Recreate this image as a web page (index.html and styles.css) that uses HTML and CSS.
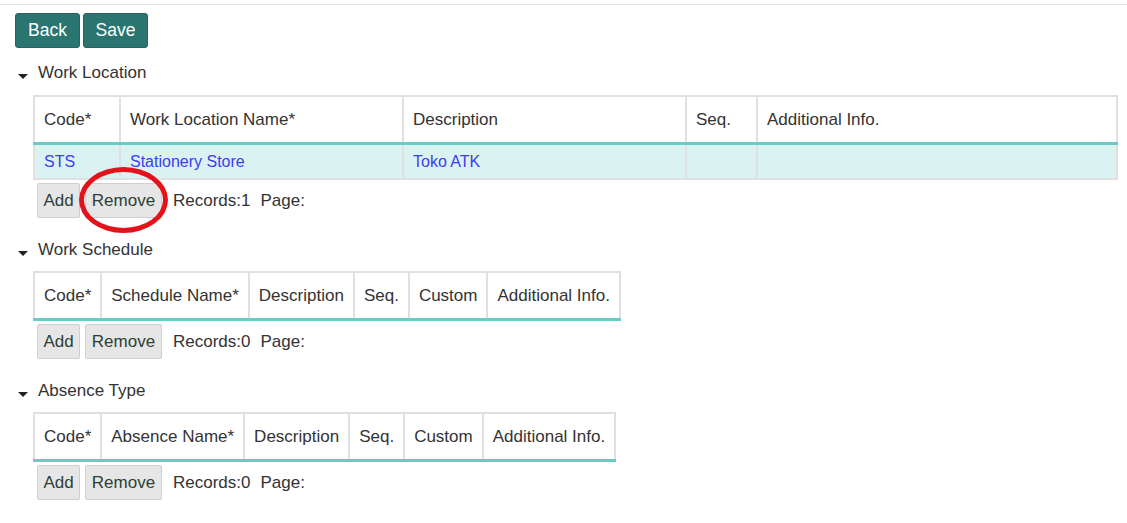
FILE: index.html
```html
<!DOCTYPE html>
<html>
<head>
<meta charset="utf-8">
<link rel="stylesheet" href="styles.css">
</head>
<body>
<div class="page">
  <div class="toolbar">
    <button class="btn-primary">Back</button>
    <button class="btn-primary">Save</button>
  </div>

  <section class="section">
    <div class="section-head"><span class="caret"></span><span>Work Location</span></div>
    <table class="grid grid-full">
      <thead>
        <tr>
          <th class="w-code">Code*</th>
          <th class="w-name">Work Location Name*</th>
          <th class="w-desc">Description</th>
          <th class="w-seq">Seq.</th>
          <th>Additional Info.</th>
        </tr>
      </thead>
      <tbody>
        <tr class="selected">
          <td><a>STS</a></td>
          <td><a>Stationery Store</a></td>
          <td><a>Toko ATK</a></td>
          <td></td>
          <td></td>
        </tr>
      </tbody>
    </table>
    <div class="actions">
      <button class="btn btn-add">Add</button>
      <span class="mark-wrap"><button class="btn btn-remove">Remove</button><span class="mark"></span></span>
      <span class="records">Records:1</span><span class="pager">Page:</span>
    </div>
  </section>

  <section class="section">
    <div class="section-head"><span class="caret"></span><span>Work Schedule</span></div>
    <table class="grid">
      <thead>
        <tr>
          <th>Code*</th>
          <th>Schedule Name*</th>
          <th>Description</th>
          <th>Seq.</th>
          <th>Custom</th>
          <th>Additional Info.</th>
        </tr>
      </thead>
    </table>
    <div class="actions">
      <button class="btn btn-add">Add</button>
      <button class="btn btn-remove">Remove</button>
      <span class="records">Records:0</span><span class="pager">Page:</span>
    </div>
  </section>

  <section class="section">
    <div class="section-head"><span class="caret"></span><span>Absence Type</span></div>
    <table class="grid">
      <thead>
        <tr>
          <th>Code*</th>
          <th>Absence Name*</th>
          <th>Description</th>
          <th>Seq.</th>
          <th>Custom</th>
          <th>Additional Info.</th>
        </tr>
      </thead>
    </table>
    <div class="actions">
      <button class="btn btn-add">Add</button>
      <button class="btn btn-remove">Remove</button>
      <span class="records">Records:0</span><span class="pager">Page:</span>
    </div>
  </section>
</div>
</body>
</html>
```

FILE: styles.css
```css
html, body {
  margin: 0;
  padding: 0;
  background: #fff;
}

body {
  font-family: "Liberation Sans", Arial, sans-serif;
  font-size: 17px;
  color: #333;
}

.page {
  margin-top: 4px;
  border-top: 1px solid #e2e2e2;
  padding: 8px 0 0 15px;
}

.toolbar {
  display: flex;
  gap: 3px;
}

.btn-primary {
  width: 65px;
  height: 35px;
  background: #2a7570;
  border: 1px solid #24665f;
  border-radius: 3px;
  color: #fff;
  font-family: "Liberation Sans", Arial, sans-serif;
  font-size: 17.5px;
  padding: 0;
}

.section {
  margin-top: 13px;
}

.section + .section {
  margin-top: 20px;
}

.section-head {
  display: flex;
  align-items: center;
  height: 24px;
  line-height: 24px;
  margin-bottom: 9px;
  margin-left: -15px;
  padding-left: 18px;
}

.toolbar + .section .section-head {
  margin-bottom: 10px;
}

.caret {
  width: 0;
  height: 0;
  border-left: 5px solid transparent;
  border-right: 5px solid transparent;
  border-top: 5px solid #222;
  margin-right: 10px;
  margin-top: 6px;
}

.grid {
  margin-left: 18px;
  border-collapse: collapse;
  border: 2px solid #e0e0e0;
}

.grid-full {
  width: 1085px;
}

.grid th {
  height: 45px;
  padding: 0 9px;
  text-align: left;
  font-weight: normal;
  white-space: nowrap;
  border-left: 2px solid #e0e0e0;
  border-bottom: 3px solid #66ccc5;
}

.grid td {
  height: 33px;
  padding: 0 9px;
  border-left: 2px solid #e0e0e0;
  border-bottom: 2px solid #e0e0e0;
}

.grid .selected td {
  background: #dbf2f2;
}

.grid a {
  color: #3c3cf2;
  font-size: 16px;
}

.w-code { width: 66px; }
.w-name { width: 263px; }
.w-desc { width: 263px; }
.w-seq { width: 51px; }

.actions {
  display: flex;
  align-items: center;
  margin: 3px 0 0 22px;
}

.btn {
  height: 35px;
  padding: 0;
  background: #e6e6e6;
  border: 1px solid #cfcfcf;
  border-radius: 2px;
  color: #2e3f36;
  font-family: "Liberation Sans", Arial, sans-serif;
  font-size: 17px;
  margin-right: 5px;
}

.btn-add { width: 43px; }
.btn-remove { width: 77px; }

.mark-wrap {
  position: relative;
  display: flex;
}

.mark {
  position: absolute;
  left: -6px;
  top: -16px;
  width: 79px;
  height: 56px;
  border: 5px solid #e3131b;
  border-radius: 50%;
  pointer-events: none;
}

.records {
  margin-left: 6px;
}

.pager {
  margin-left: 10px;
}
```
